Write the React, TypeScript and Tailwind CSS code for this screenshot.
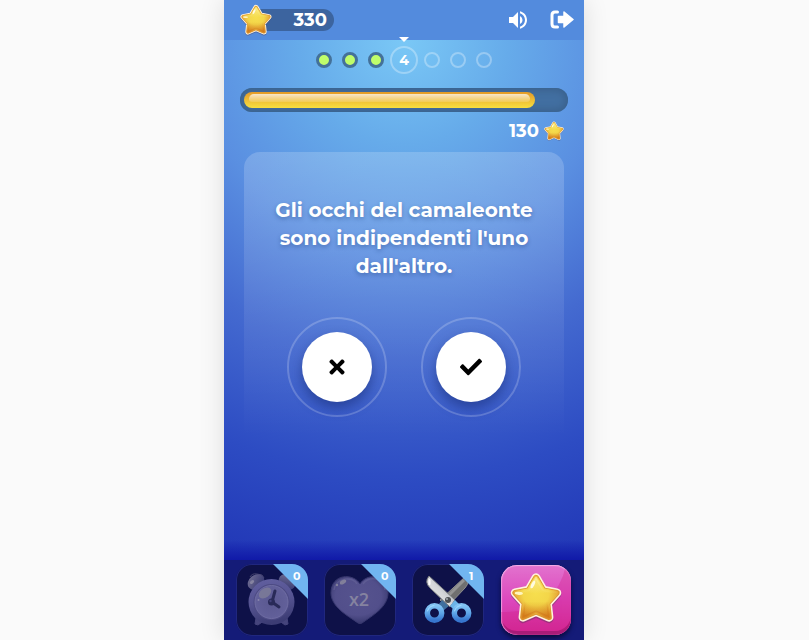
import React from "react";
import { FaCheck, FaTimes } from "react-icons/fa";
import { MdVolumeUp } from "react-icons/md";

const STAR = "M50 11 L64 35 L90 40 L72 60 L75 87 L50 76 L25 87 L28 60 L10 40 L36 35 Z";

function Star({ id, className }: { id: string; className: string }) {
  return (
    <svg viewBox="0 0 100 100" className={className} aria-hidden="true">
      <defs>
        <radialGradient id={id} cx="0.5" cy="0.4" r="0.62">
          <stop offset="0" stopColor="#f6de4e" />
          <stop offset="0.5" stopColor="#f3d649" />
          <stop offset="0.78" stopColor="#e9b23b" />
          <stop offset="1" stopColor="#dc8e28" />
        </radialGradient>
        <linearGradient id={`${id}-light`} x1="0" y1="0" x2="0" y2="1">
          <stop offset="0" stopColor="#fff3a0" stopOpacity="0.7" />
          <stop offset="0.4" stopColor="#fff3a0" stopOpacity="0" />
          <stop offset="0.6" stopColor="#cf7315" stopOpacity="0" />
          <stop offset="1" stopColor="#cf7315" stopOpacity="0.55" />
        </linearGradient>
      </defs>
      <path d={STAR} fill="#4b3a55" stroke="#4b3a55" strokeWidth="17" strokeLinejoin="round" opacity="0.4" transform="translate(0 3)" />
      <path d={STAR} fill="#fff3dc" stroke="#fff3dc" strokeWidth="17" strokeLinejoin="round" />
      <path d={STAR} fill="#dc9530" stroke="#dc9530" strokeWidth="11" strokeLinejoin="round" />
      <path d={STAR} fill={`url(#${id})`} stroke={`url(#${id})`} strokeWidth="8" strokeLinejoin="round" />
      <path d={STAR} fill={`url(#${id}-light)`} stroke={`url(#${id}-light)`} strokeWidth="4" strokeLinejoin="round" />
      <ellipse cx="44" cy="24" rx="3" ry="8" fill="#fffbe0" transform="rotate(26 44 24)" />
      <ellipse cx="17" cy="41" rx="8" ry="3" fill="#fff6c0" transform="rotate(4 17 41)" />
    </svg>
  );
}

function ExitIcon() {
  return (
    <svg viewBox="0 0 24 20" className="h-5 w-6" fill="none" aria-hidden="true">
      <path d="M7.500 2 H5 Q2 2 2 5 V14 Q2 17 5 17 H7.500" stroke="currentColor" strokeWidth="3" strokeLinecap="round" />
      <path d="M8.500 6.500 H14 V2 L23 9.500 L14 17 V12.500 H8.500 Z" fill="currentColor" stroke="currentColor" strokeWidth="1.500" strokeLinejoin="round" />
    </svg>
  );
}

function ClockIcon() {
  return (
    <svg viewBox="0 0 72 72" className="size-full" aria-hidden="true">
      <defs>
        <linearGradient id="bell" x1="0" y1="0" x2="0.6" y2="1">
          <stop offset="0" stopColor="#747295" />
          <stop offset="1" stopColor="#393a73" />
        </linearGradient>
        <linearGradient id="rim" x1="0" y1="0" x2="0.2" y2="1">
          <stop offset="0" stopColor="#6260a0" />
          <stop offset="0.55" stopColor="#555391" />
          <stop offset="1" stopColor="#3c3c74" />
        </linearGradient>
        <radialGradient id="dial">
          <stop offset="0" stopColor="#5a5890" />
          <stop offset="1" stopColor="#62609a" />
        </radialGradient>
      </defs>
      <path d="M20 54 l-1 6 3 1 7-5 M51 54 l1 6 -3 1 -7-5" fill="#45447c" stroke="#45447c" strokeLinejoin="round" />
      <path d="M14 13 q2-4 7-3 l5 1 2 3 M59 12 q-5-4-9-2 l-6 4" fill="none" stroke="#45446f" strokeWidth="1" />
      <ellipse cx="20" cy="18" rx="9" ry="7" fill="url(#bell)" transform="rotate(-38 20 18)" />
      <ellipse cx="51" cy="18" rx="9" ry="7" fill="url(#bell)" transform="rotate(38 51 18)" />
      <circle cx="35.500" cy="38" r="23" fill="url(#rim)" />
      <circle cx="35.500" cy="38" r="18" fill="#4d4b84" />
      <circle cx="35.500" cy="38" r="16.500" fill="url(#dial)" stroke="#6f6da3" />
      <ellipse cx="29" cy="29" rx="7" ry="4.500" fill="#7d7b98" opacity="0.85" transform="rotate(-35 29 29)" />
      <circle cx="22.500" cy="36" r="1" fill="#8886ad" />
      <ellipse cx="16" cy="18" rx="2.500" ry="1.500" fill="#8583a0" transform="rotate(-40 16 18)" />
      <path d="M36 38 L39 27 M36 38 L43 43" fill="none" stroke="#292a58" strokeWidth="3" strokeLinecap="round" />
      <circle cx="35.500" cy="38" r="3.500" fill="#292a58" />
      <circle cx="34.500" cy="37" r="1.200" fill="#43427a" />
    </svg>
  );
}

function HeartIcon() {
  return (
    <svg viewBox="0 0 72 72" className="size-full" aria-hidden="true">
      <defs>
        <radialGradient id="heart" cx="0.48" cy="0.42" r="0.62">
          <stop offset="0" stopColor="#56538e" />
          <stop offset="0.65" stopColor="#524f8b" />
          <stop offset="1" stopColor="#333469" />
        </radialGradient>
      </defs>
      <path d="M36 20 C30 9 7 9 7 29 C7 43 24 52 34 59 Q36 60 38 59 C48 52 64 43 64 29 C64 9 42 9 36 20 Z" fill="url(#heart)" stroke="#38386f" strokeWidth="1" />
      <path d="M10 26 C12 13 29 12 33 20 M39 20 C45 12 60 13 61 26" fill="none" stroke="#6a689c" strokeWidth="1.500" opacity="0.5" />
      <ellipse cx="19" cy="18" rx="3.500" ry="2" fill="#817f9a" transform="rotate(-30 19 18)" />
      <circle cx="13" cy="21" r="1.200" fill="#817f9a" />
      <text x="35" y="42" textAnchor="middle" fontFamily="Open Sans, sans-serif" fontSize="18" fontWeight="600" fill="#8583a0">x2</text>
    </svg>
  );
}

function ScissorsIcon() {
  return (
    <svg viewBox="0 0 72 72" className="size-full" aria-hidden="true">
      <defs>
        <linearGradient id="blade" x1="0" y1="1" x2="1" y2="0">
          <stop offset="0" stopColor="#f0f0f0" />
          <stop offset="0.5" stopColor="#d4d6d9" />
          <stop offset="1" stopColor="#8c9095" />
        </linearGradient>
        <linearGradient id="grip" x1="0" y1="0" x2="0" y2="1">
          <stop offset="0" stopColor="#82c3f4" />
          <stop offset="0.5" stopColor="#5fa6e9" />
          <stop offset="1" stopColor="#3776cf" />
        </linearGradient>
      </defs>
      <path d="M54 12 Q59 17 53 24 L35 43 L28 36 Z" fill="#707070" stroke="#8e8e8e" strokeWidth="1" />
      <path d="M52 16 L33 35" stroke="#949494" strokeWidth="3" />
      <path d="M31 35 L38 41 L31 47 L26 41 Z" fill="#3f6f9e" />
      <path d="M17 12 L43 36 L38 43 L18 24 Q12 18 17 12 Z" fill="url(#blade)" stroke="#75787c" strokeWidth="1" />
      <path d="M17.500 16 L17.500 20" stroke="#ffffff" strokeWidth="2" strokeLinecap="round" />
      <path d="M38 42 L43 36 L49 42 L43 47 Z" fill="#6bb4e8" />
      <circle cx="22.500" cy="49" r="7.200" fill="none" stroke="url(#grip)" strokeWidth="5.500" />
      <circle cx="49.500" cy="49" r="7.200" fill="none" stroke="url(#grip)" strokeWidth="5.500" />
      <path d="M15.500 47 Q17 42 22 41.500 M42.500 47 Q44 42 49 41.500" fill="none" stroke="#a1ddff" strokeWidth="1" strokeLinecap="round" />
      <circle cx="36" cy="36" r="3" fill="#4b4f53" />
      <circle cx="35" cy="35" r="1" fill="#a7adb3" />
    </svg>
  );
}

function Booster({ label, count, children }: { label: string; count: number; children: React.ReactNode }) {
  return (
    <button
      type="button"
      aria-label={label}
      className="relative size-[72px] overflow-hidden rounded-2xl bg-[#0e1148] inset-ring inset-ring-[#20277f]"
    >
      {children}
      <span className="absolute top-0 right-0 size-[35px] bg-[#71b5f0] pt-1 pl-5 text-left text-[11px] leading-4 font-bold text-white [clip-path:polygon(0_0,100%_0,100%_100%)]">
        {count}
      </span>
    </button>
  );
}

function Answer({ label, children }: { label: string; children: React.ReactNode }) {
  return (
    <div className="flex size-[100px] items-center justify-center rounded-full border-2 border-white/20">
      <button
        type="button"
        aria-label={label}
        className="flex size-[70px] items-center justify-center rounded-full bg-white text-[22px] text-black shadow-[0_6px_12px_rgba(20,40,110,0.5)]"
      >
        {children}
      </button>
    </div>
  );
}

const steps = [1, 2, 3, 4, 5, 6, 7];
const current = 4;

export default function App() {
  return (
    <div className="min-h-screen bg-[#fafafa] pr-px font-['Montserrat','Inter',sans-serif] text-white">
      <div className="mx-auto flex min-h-screen w-full max-w-[360px] flex-col shadow-[0_0_24px_rgba(0,0,0,0.12)]">
        <header className="flex h-10 items-center justify-between bg-[#538bdd] pr-[10px] pl-4">
          <div className="flex items-center">
            <Star id="score-star" className="z-10 size-8" />
            <div className="-ml-4 flex h-[22px] w-[78px] items-center justify-end rounded-r-full bg-[#3c649f] pr-[7px] text-lg font-bold">
              330
            </div>
          </div>
          <div className="flex items-center gap-5">
            <button type="button" aria-label="Audio" className="text-2xl">
              <MdVolumeUp />
            </button>
            <button type="button" aria-label="Esci">
              <ExitIcon />
            </button>
          </div>
        </header>

        <main className="flex flex-1 flex-col bg-[linear-gradient(to_top,#1019a8_0,rgba(16,25,168,0)_20px),radial-gradient(circle_at_50%_0,#7ac8f6_0,#66abea_105px,#5a8fe1_208px,#446ad0_316px,#2d4cc3_436px,#2238b7_540px)] px-4">
          <ol className="flex h-10 items-center justify-center">
            {steps.map((step) =>
              step === current ? (
                <li key={step} className="relative flex w-[30px] justify-center" aria-current="step">
                  <span className="absolute -top-[9px] size-0 border-x-[5px] border-t-[5px] border-x-transparent border-t-white" />
                  <span className="flex size-7 items-center justify-center rounded-full border-2 border-white/30 text-sm font-bold">
                    {step}
                  </span>
                </li>
              ) : (
                <li key={step} className="flex w-[26px] justify-center">
                  <span
                    className={
                      step < current
                        ? "size-4 rounded-full border-3 border-[#447199] bg-[#bffd6b]"
                        : "size-4 rounded-full border-2 border-white/30"
                    }
                  />
                </li>
              ),
            )}
          </ol>

          <div
            role="progressbar"
            aria-label="Tempo"
            aria-valuenow={91}
            className="mt-2 h-6 rounded-full bg-[#426fa1] p-1 shadow-[inset_0_0_6px_3px_#3b638f]"
          >
            <div className="h-4 w-[91%] rounded-full bg-[linear-gradient(#e39a28,#eebd35_50%,#f7df3e)] px-[5px] pt-[2px]">
              <div className="h-2 rounded-t-md rounded-b-sm bg-linear-to-b from-white/75 to-white/15" />
            </div>
          </div>

          <div className="mt-2 flex h-[22px] items-center justify-end gap-[5px] pr-1 text-lg font-bold">
            130
            <Star id="prize-star" className="size-5" />
          </div>

          <section className="mx-1 mt-[10px] flex flex-col items-center rounded-t-2xl bg-linear-to-b from-white/18 to-transparent px-6 pt-11 pb-5">
            <p className="text-center text-xl leading-7 font-bold [text-shadow:0_2px_4px_rgba(30,60,120,0.4)]">
              Gli occhi del camaleonte sono indipendenti l'uno dall'altro.
            </p>
            <div className="mt-[37px] flex gap-[34px]">
              <Answer label="Falso">
                <FaTimes />
              </Answer>
              <Answer label="Vero">
                <FaCheck />
              </Answer>
            </div>
          </section>
        </main>

        <footer className="flex h-20 justify-between bg-[#141b78] px-3 pt-1">
          <Booster label="Tempo extra" count={0}>
            <ClockIcon />
          </Booster>
          <Booster label="Doppia vita" count={0}>
            <HeartIcon />
          </Booster>
          <Booster label="Taglia risposte" count={1}>
            <ScissorsIcon />
          </Booster>
          <button
            type="button"
            aria-label="Premi"
            className="relative mx-px mt-px flex size-[70px] items-start justify-center overflow-hidden rounded-2xl bg-linear-to-b from-[#e272ce] via-[#dc48be] to-[#d32795] pt-[7px] shadow-[0_3px_5px_#080b3d,inset_0_1px_1px_#f2b1e7,inset_1px_0_1px_#ef9add,inset_0_-4px_0_#a81c78]"
          >
            <svg viewBox="0 0 70 70" className="absolute inset-0 size-full" aria-hidden="true">
              <path d="M0 47 Q55 48 65 0 H54 Q70 0 70 16 V54 Q70 66 55 66 H14 Q0 66 0 54 Z" fill="#cf1c86" opacity="0.3" />
            </svg>
            <Star id="shop-star" className="relative size-[52px]" />
          </button>
        </footer>
      </div>
    </div>
  );
}
